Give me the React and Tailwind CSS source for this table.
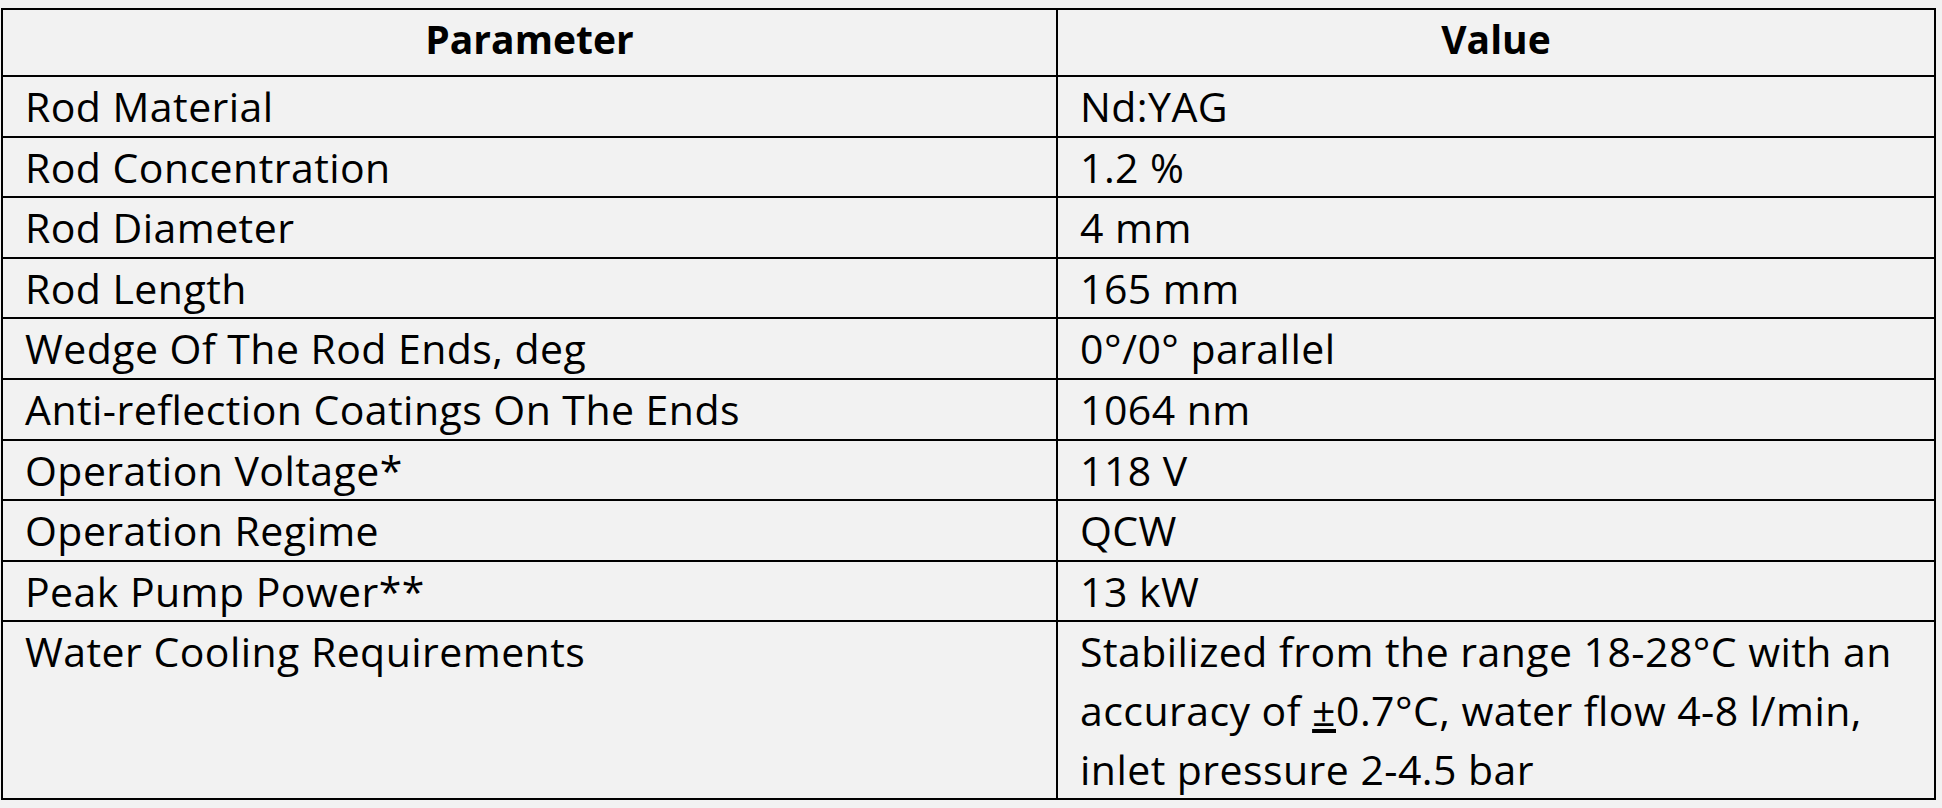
import React from 'react';

const rows = [
  ['Rod Material', 'Nd:YAG'],
  ['Rod Concentration', '1.2 %'],
  ['Rod Diameter', '4 mm'],
  ['Rod Length', '165 mm'],
  ['Wedge Of The Rod Ends, deg', '0°/0° parallel'],
  ['Anti-reflection Coatings On The Ends', '1064 nm'],
  ['Operation Voltage*', '118 V'],
  ['Operation Regime', 'QCW'],
  ['Peak Pump Power**', '13 kW'],
];

const App = () => {
  return (
    <div className="min-h-screen bg-[#f2f2f2] pt-[8px] pl-[1px] font-['Open_Sans',sans-serif] text-black">
      <table className="w-[1935px] border-collapse text-[41px] tracking-[0.45px]">
        <thead>
          <tr>
            <th className="w-[1055px] border-2 border-black h-[67px] align-top text-[39px] tracking-normal leading-[58.6px] font-bold">
              Parameter
            </th>
            <th className="border-2 border-black h-[67px] align-top text-[39px] tracking-normal leading-[58.6px] font-bold">
              Value
            </th>
          </tr>
        </thead>
        <tbody>
          {rows.map(([param, value]) => (
            <tr key={param}>
              <td className="border-2 border-black px-[22px] leading-[58.6px] align-top">{param}</td>
              <td className="border-2 border-black px-[22px] leading-[58.6px] align-top">{value}</td>
            </tr>
          ))}
          <tr>
            <td className="border-2 border-black px-[22px] leading-[58.6px] align-top">
              Water Cooling Requirements
            </td>
            <td className="border-2 border-black px-[22px] leading-[58.6px] align-top">
              Stabilized from the range 18-28°C with an
              <br />
              accuracy of <span className="underline">±</span>0.7°C, water flow 4-8 l/min,
              <br />
              inlet pressure 2-4.5 bar
            </td>
          </tr>
        </tbody>
      </table>
    </div>
  );
};

export default App;
